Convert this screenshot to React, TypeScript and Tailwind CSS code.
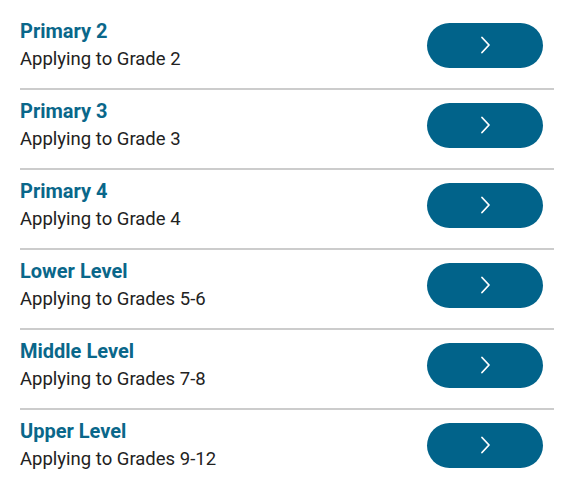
const programs = [
  { title: "Primary 2", sub: "Applying to Grade 2" },
  { title: "Primary 3", sub: "Applying to Grade 3" },
  { title: "Primary 4", sub: "Applying to Grade 4" },
  { title: "Lower Level", sub: "Applying to Grades 5-6" },
  { title: "Middle Level", sub: "Applying to Grades 7-8" },
  { title: "Upper Level", sub: "Applying to Grades 9-12" },
];

function Chevron() {
  return (
    <svg width="11" height="18" viewBox="0 0 11 18" fill="none">
      <path d="M2 1.5L9 9L2 16.5" stroke="white" strokeWidth="1.8" strokeLinecap="round" strokeLinejoin="round" />
    </svg>
  );
}

export default function App() {
  return (
    <div className="w-[566px] min-h-[488px] bg-white pl-5 pr-3 pt-[10px] font-['Roboto',sans-serif]">
      {programs.map((p, i) => (
        <div
          key={p.title}
          className={`flex items-center justify-between pt-[7px] pb-[15px] ${i < programs.length - 1 ? "border-b-2 border-[#cccccc]" : ""}`}
        >
          <div className="flex flex-col">
            <span className="text-[20px] leading-[28px] font-bold text-[#0a678a]">{p.title}</span>
            <span className="text-[18.5px] leading-[28px] text-[#222222]">{p.sub}</span>
          </div>
          <button className="mr-[11px] w-[116px] h-[45px] rounded-full bg-[#01638a] flex items-center justify-center">
            <Chevron />
          </button>
        </div>
      ))}
    </div>
  );
}
